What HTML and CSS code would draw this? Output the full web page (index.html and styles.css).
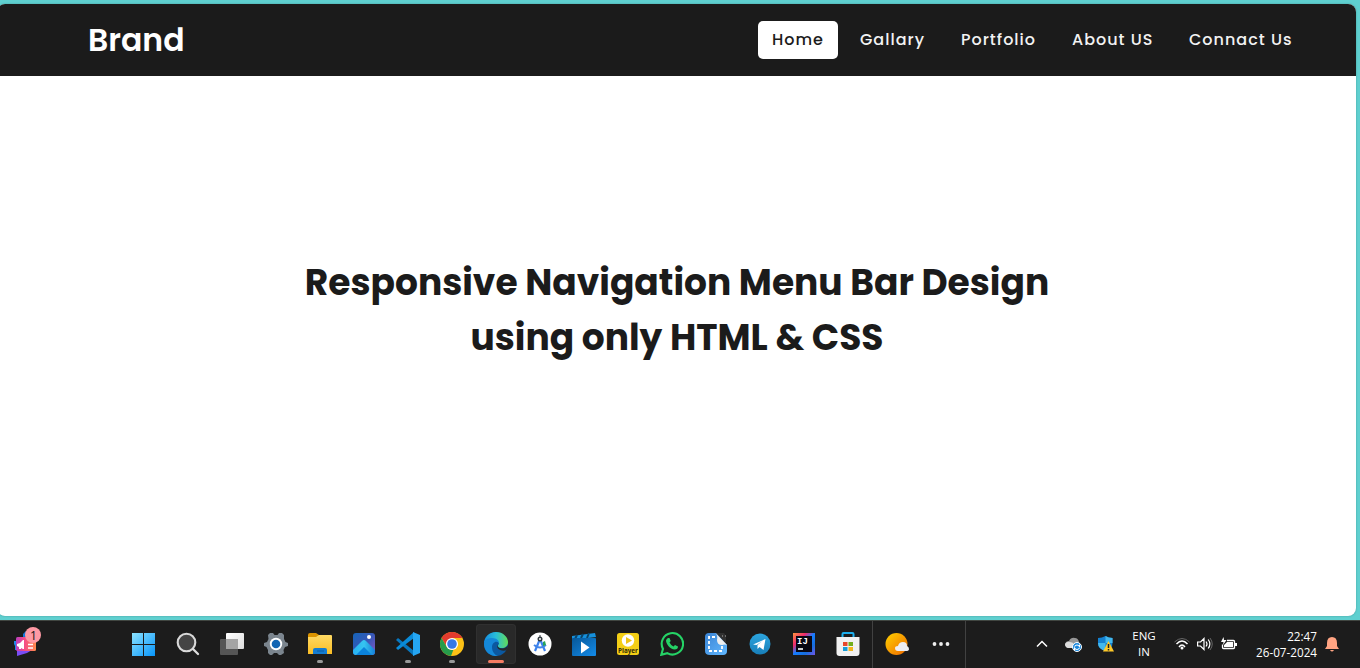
FILE: index.html
```html
<!DOCTYPE html>
<html lang="en">
<head>
<meta charset="utf-8">
<title>Responsive Navigation</title>
<link rel="stylesheet" href="styles.css">
</head>
<body>
<div class="desktop">
<div class="window">
  <header class="navbar">
    <div class="brand">Brand</div>
    <nav class="menu">
      <a class="link home">Home</a><a class="link gallery">Gallary</a><a class="link portfolio">Portfolio</a><a class="link about">About US</a><a class="link contact">Connact Us</a>
    </nav>
  </header>
  <main class="hero"><h1>Responsive Navigation Menu Bar Design<br>using only HTML &amp; CSS</h1></main>
</div>
<footer class="taskbar">
  <div class="widgets">
    <svg width="30" height="32" viewBox="0 0 30 32"><defs><linearGradient id="wg"><stop stop-color="#b83fc0"/><stop offset=".4" stop-color="#f4498a"/><stop offset="1" stop-color="#ff8a4a"/></linearGradient></defs><path d="M11 11V7l3-3v7z" fill="#1677dc"/><path d="M2 14h3v9H3v-4l-1-2z" fill="#2187e8"/><path d="M5 23h15l-5 3-10 3z" fill="#7a4df5"/><rect x="4" y="10" width="20" height="14" rx="1.500" fill="url(#wg)"/><path d="M5 17l3-1 3-3h1v9h-1l-2-1v1H7v-2l-2-1z" fill="#fff"/><path d="M16 17.500h5M16 21h5" stroke="#fff" stroke-width="1.400"/><circle cx="21" cy="8" r="8" fill="#ff99a4"/><text x="21.500" y="12.500" text-anchor="middle" class="badge">1</text></svg>
  </div>
  <div class="apps">
    <span class="app"><svg viewBox="0 0 24 24"><defs><linearGradient id="win" gradientUnits="userSpaceOnUse" x1="0" y1="1" x2="23" y2="24"><stop stop-color="#8be2ff"/><stop offset="1" stop-color="#0795fa"/></linearGradient></defs><path d="M0 1h11v11H0zM12 1h11v11H12zM0 13h11v11H0zM12 13h11v11H12z" fill="url(#win)"/></svg></span>
    <span class="app"><svg viewBox="0 0 24 24"><circle cx="10.500" cy="10.500" r="8.800" fill="#444" stroke="#d9d9d9" stroke-width="2.100"/><path d="M17 17l5 5" stroke="#dedede" stroke-width="2.300" stroke-linecap="round"/></svg></span>
    <span class="app"><svg viewBox="0 0 24 24"><defs><linearGradient id="task" x2="1" y2="1"><stop stop-color="#fff"/><stop offset="1" stop-color="#dcdcdc"/></linearGradient></defs><rect y="7" width="18" height="16" rx="1" fill="#555"/><rect x="6" y="1" width="18" height="16" rx="1" fill="url(#task)"/><path d="M6 7h12v10H6z" fill="#a4a4a4"/></svg></span>
    <span class="app"><svg viewBox="0 0 24 24"><path d="M6 1h3l1.500 2h3L15 1h3l2 2v4l1.500 3 2.500 1v3l-3 1-1.500 3 .5 3-3 2h-2l-2-2h-3l-2 2H6l-2-2v-3l-1.500-3L0 14v-3l3-1 1.500-3L4 3z" fill="#7b858e"/><circle cx="12" cy="12" r="6.200" fill="#fff"/><circle cx="12" cy="12" r="4.300" fill="#1265b3"/></svg></span>
    <span class="app running"><svg viewBox="0 0 24 24"><defs><linearGradient id="fold" x2="0" y2="1"><stop stop-color="#ffda64"/><stop offset="1" stop-color="#fbbd24"/></linearGradient></defs><path d="M0 3q0-2 2-2h6l3 2v6H0z" fill="#dc9400"/><path d="M0 5h8l3-2h12q1 0 1 1v18H0z" fill="url(#fold)"/><path d="M5 22v-4q0-2 2-2h10q2 0 2 2v4z" fill="#147cd1"/><path d="M9 19h7" stroke="#0b5aa0"/></svg></span>
    <span class="app"><svg viewBox="0 0 24 24"><defs><linearGradient id="photo" x2="1" y2="1"><stop stop-color="#1464b8"/><stop offset=".5" stop-color="#3857b7"/><stop offset="1" stop-color="#8757c5"/></linearGradient><linearGradient id="photo2"><stop stop-color="#27b1f4"/><stop offset=".5" stop-color="#36c5f0"/><stop offset="1" stop-color="#147fd8"/></linearGradient></defs><rect x="1" y="1" width="22" height="22" rx="3" fill="url(#photo)"/><path d="M1 18L10 9q2-2 4 0l9 9v2q0 3-3 3H4q-3 0-3-3z" fill="url(#photo2)"/><path d="M4 23l8-8 8 8z" fill="#0b83dc"/><circle cx="17" cy="5" r="2" fill="#fff"/></svg></span>
    <span class="app running"><svg viewBox="0 0 24 24"><path d="M0 8l2-2 16 13v5z" fill="#0878c0"/><path d="M0 16l2 2L18 6V0z" fill="#0a8bd8"/><path d="M17 0l7 3v18l-7 3z" fill="#25a6f2"/></svg></span>
    <span class="app running"><svg viewBox="0 0 24 24"><circle cx="12" cy="12" r="12" fill="#fbc116"/><path d="M1.600 6A12 12 0 0 1 22.400 6H12L7 15z" fill="#e33b2e"/><path d="M1.600 6l5.200 9q2 3 6.500 3L11 24A12 12 0 0 1 1.600 6z" fill="#269c4b"/><circle cx="12" cy="12" r="6.100" fill="#fff"/><circle cx="12" cy="12" r="4.800" fill="#3578e5"/></svg></span>
    <span class="app active"><svg viewBox="0 0 24 24"><defs><linearGradient id="edge"><stop stop-color="#168de0"/><stop offset=".5" stop-color="#28bdd9"/><stop offset="1" stop-color="#62dd57"/></linearGradient></defs><circle cx="12" cy="12" r="12" fill="#0b58a0"/><path d="M0 12C0 5 5 0 12 0s12 5 12 10c0 4-3 6-6 6-5 0-5-2-3-4 0-3-3-5-7-5-5 0-8 3-8 5z" fill="url(#edge)"/><path d="M0 12c0-4 4-6 8-6 5 0 7 3 7 5-3-3-7 0-7 4 0 5 3 8 6 9C6 25 0 19 0 12z" fill="#1588d8"/><path d="M14.500 11.500c-2 2 0 5 3.500 5 3 0 5-2 6-3-.5 3-1 4-2 5-7 1-11-3-7.500-7z" fill="#252a2c"/></svg></span>
    <span class="app"><svg viewBox="0 0 24 24"><circle cx="12" cy="12" r="11.500" fill="#fff"/><path d="M12 7l-5 12M12 7l5 12" stroke="#3c82ee" stroke-width="2.200" fill="none"/><path d="M6 13q6 5 12 0" fill="none" stroke="#4285e8" stroke-width="2"/><circle cx="12" cy="7" r="2.500" fill="#30393e"/><circle cx="12" cy="7" r="1" fill="#fff"/><path d="M12 3v3" stroke="#30393e"/><path d="M15 10l2-1 1 4-3 1z" fill="#28a35b"/></svg></span>
    <span class="app"><svg viewBox="0 0 24 24"><defs><linearGradient id="movie" x2="1" y2="1"><stop stop-color="#075798"/><stop offset="1" stop-color="#138be9"/></linearGradient></defs><path d="M0 4l23-3 1 4L0 8z" fill="#1590dc"/><path d="M5 3l-2 4M11 2L9 6M17 1l-2 5" stroke="#0b4268" stroke-width="2"/><rect y="6" width="24" height="18" rx="1" fill="url(#movie)"/><path d="M9 9.500l8.500 6-8.500 6z" fill="#fff"/></svg></span>
    <span class="app"><svg viewBox="0 0 24 24"><rect x="1" y="1" width="22" height="22" rx="2.500" fill="#f4cf16"/><circle cx="12" cy="8.500" r="6.200" fill="#fff"/><path d="M10 5l6 3.500-6 3.500z" fill="#efc417"/><text x="12" y="20.500" text-anchor="middle" class="player">Player</text></svg></span>
    <span class="app"><svg viewBox="0 0 24 24"><path d="M1.300 22.800l1.700-5.900A10.700 10.700 0 1 1 7.300 21.200z" fill="none" stroke="#25d366" stroke-width="2.100"/><path d="M8 6h1.500l1.200 3-1.200 1.500q1.500 3 4 4l1.500-1.500 3 1.400q0 2.700-3.300 3.200C10 17 6 12 6 8.500Q6.500 6.500 8 6z" fill="#25d366"/></svg></span>
    <span class="app"><svg viewBox="0 0 24 24"><defs><linearGradient id="snip" x2="1" y2="1"><stop stop-color="#3b84d4"/><stop offset="1" stop-color="#60b7ff"/></linearGradient></defs><path d="M12 1h8l2 3v9z" fill="#303030"/><path d="M5 1h7l11 12v6q0 4-4 4H6q-5 0-5-4V5q0-4 4-4z" fill="url(#snip)"/><path d="M11 5H5v14h13v-6" fill="none" stroke="#fff" stroke-width="1.800" stroke-dasharray="3 2"/><path d="M11.500 1L23 13q-2-1-5 0-5 0-5-5 1-4-1.500-7z" fill="#eee"/><path d="M18 4h1M21 4h1" stroke="#aaa"/></svg></span>
    <span class="app"><svg viewBox="0 0 24 24"><defs><linearGradient id="tg" x2="0" y2="1"><stop stop-color="#2ca5df"/><stop offset="1" stop-color="#187fb9"/></linearGradient></defs><circle cx="12" cy="12" r="10.500" fill="url(#tg)"/><path d="M5 12.500L17.500 7l-2 11-4-3-2 2v-4l5-4-6 4z" fill="#fff"/></svg></span>
    <span class="app"><svg viewBox="0 0 24 24"><defs><linearGradient id="ij" x2="1" y2="1"><stop stop-color="#ff963f"/><stop offset=".3" stop-color="#ee286c"/><stop offset=".5" stop-color="#137cff"/><stop offset=".75" stop-color="#176edd"/><stop offset="1" stop-color="#7255e8"/></linearGradient></defs><rect x="1" y="1" width="22" height="22" fill="url(#ij)"/><rect x="4" y="4" width="16" height="16" fill="#080612"/><text x="5" y="12" class="ij">IJ</text><path d="M6 17h5" stroke="#fff" stroke-width="1.600"/></svg></span>
    <span class="app"><svg viewBox="0 0 24 24"><path d="M6.500 7V2q0-1 1-1h9q1 0 1 1v5" fill="none" stroke="#1dafed" stroke-width="2"/><path d="M.5 5h23v16q0 3-3 3h-17q-3 0-3-3z" fill="#f1f1f1"/><path d="M7 10h4.500v4H7z" fill="#e7472a"/><path d="M12.500 10H17v4h-4.500z" fill="#72ae1c"/><path d="M7 15h4.500v4H7z" fill="#159bd7"/><path d="M12.500 15H17v4h-4.500z" fill="#f2b51c"/></svg></span>
  </div>
  <div class="extras">
    <span class="app"><svg viewBox="0 0 24 24"><defs><linearGradient id="sun" x2="1" y2="1"><stop stop-color="#ffd100"/><stop offset="1" stop-color="#ef6900"/></linearGradient></defs><circle cx="11.500" cy="12" r="11" fill="url(#sun)"/><path d="M13 19q-3 0-3-3 0-2 3-2 1-4 5-4t4 4q2 1 2 3t-3 2z" fill="#eeeef2"/></svg></span>
    <span class="app"><svg viewBox="0 0 24 24" fill="#eee"><circle cx="5.500" cy="12" r="1.900"/><circle cx="12" cy="12" r="1.900"/><circle cx="18.500" cy="12" r="1.900"/></svg></span>
  </div>
  <div class="tray">
    <svg class="chevron" width="12" height="12" viewBox="0 0 12 12"><path d="M1 8.500l5-5 5 5" fill="none" stroke="#fff" stroke-width="1.500"/></svg>
    <svg class="cloud" width="17" height="16" viewBox="0 0 17 16"><path d="M3 12q-3-1-3-4 1-3 4-3 2-4 6-3 3 0 4 4l1 6z" fill="#969696"/><path d="M3 12q-3-1-3-4 2-3 5-2 3 0 5 3v3z" fill="#ddd"/><circle cx="12" cy="11" r="4.500" fill="#1685dc" stroke="#fff"/><path d="M9.500 10.500q2.500-3 5 0v-2M14.500 12q-2.500 3-5 0v2" fill="none" stroke="#fff" stroke-width="1.100"/></svg>
    <svg class="shield" width="16" height="18" viewBox="0 0 16 18"><path d="M7.500 1q3 2 7 2v5q0 6-7 8Q0 14 0 8V3q4 0 7.500-2z" fill="#1481d1"/><path d="M0 8h7.500v8Q0 14 0 8zM7.500 1q3 2 7 2v5h-7z" fill="#43b8ed"/><path d="M10.500 6L16 16.500H5z" fill="#ffc928"/><path d="M10.500 9v4M10.500 14v1.500" stroke="#222" stroke-width="1.500"/></svg>
    <div class="language">ENG<br>IN</div>
    <svg class="wifi" width="16" height="14" viewBox="0 0 16 14"><g fill="none"><path d="M.5 5Q8-2 15.500 5" stroke="#666"/><path d="M2.500 7Q8 1 13.500 7M5 10q3-4 6 0" stroke="#fff" stroke-width="1.400"/></g><circle cx="8" cy="11" r="1.500" fill="#fff"/></svg>
    <svg class="volume" width="16" height="14" viewBox="0 0 16 14"><path d="M.6 5h3L7 1.500v11L3.500 9H.6zM9 4.500q2 2.500 0 5M11.200 2.500q3.300 4.500 0 9" fill="none" stroke="#fff" stroke-width="1.200"/><path d="M13 1q4.500 6 0 12" fill="none" stroke="#666"/></svg>
    <svg class="battery" width="17" height="14" viewBox="0 0 17 14"><path d="M6 3.500h6.500q1 0 1 1v6q0 1-1 1h-10q-1 0-1-1v-3" fill="none" stroke="#fff" stroke-width="1.300"/><path d="M3 8l3-3h6v5H3zM14 6h2v3h-2zM2.500 0L0 5h2.500L2 8l3.500-5H3z" fill="#fff"/></svg>
    <div class="clock">22:47<br>26-07-2024</div>
    <svg class="bell" width="14" height="16" viewBox="0 0 14 16"><path d="M2 7q0-6 5-6t5 6v3l2 3H0l2-3zM5 14h4q-2 3-4 0z" fill="#ffa483"/></svg>
  </div>
</footer>
</div>
</body>
</html>
```
FILE: styles.css
```css
* { box-sizing: border-box; }
body { margin: 0; }
.desktop { width: 1360px; height: 668px; display: flex; flex-direction: column; overflow: hidden; background: #5fd0d0; }
.window { width: 1359px; height: 612px; margin: 4px 0 4px -3px; border-radius: 8px; overflow: hidden; background: #fff; box-shadow: 0 0 2px #45999a; flex: none; font-family: Poppins, Inter, sans-serif; }
.navbar { height: 72px; display: flex; align-items: center; justify-content: space-between; background: #1b1b1b; padding: 0 49px 0 91px; color: #fff; }
.brand { font-size: 31.5px; font-weight: 600; line-height: 40px; }
.menu { display: flex; gap: 8px; }
.link { height: 38px; display: flex; align-items: center; padding: 0 14px 2px; border-radius: 5px; font-size: 16px; font-weight: 500; letter-spacing: 1px; color: #f2f2f2; white-space: nowrap; }
.home { width: 80px; background: #fff; color: #1b1b1b; }
.gallery { width: 93px; }
.portfolio { width: 103px; }
.about { width: 109px; }
.contact { width: 132px; }
.hero { height: 540px; display: flex; align-items: flex-start; justify-content: center; padding: 179px 2px 0 3px; }
h1 { margin: 0; text-align: center; color: #1b1b1b; font-size: 36px; line-height: 55px; font-weight: 700; white-space: nowrap; }
.taskbar { height: 48px; border-top: 1px solid #414641; display: flex; background: #1c1c1c; flex: none; color: #fff; font-family: "Open Sans", "Noto Sans", sans-serif; }
.widgets { width: 122px; padding: 6px 0 0 12px; }
.badge { font: 12px "Open Sans", sans-serif; fill: #111; }
.apps { display: flex; width: 750px; }
.extras { display: flex; width: 94px; padding-left: 2px; border: solid #414141; border-width: 0 1px; }
.app { width: 40px; height: 40px; margin: 3px 2px; padding: 8px; flex: none; position: relative; }
.app > svg { width: 24px; height: 24px; display: block; }
.running::after, .active::after { content: ""; position: absolute; width: 6px; height: 3px; bottom: 1px; left: 17px; border-radius: 2px; background: #999; }
.active { background: #292929; border-radius: 4px; box-shadow: inset 0 0 0 1px #303030; }
.active::after { width: 16px; left: 12px; background: #f67c63; }
.player { font: 700 6.3px "Open Sans", sans-serif; fill: #332c08; }
.ij { font: 700 9px "Liberation Mono", monospace; fill: #fff; }
.tray { display: flex; align-items: center; padding-left: 70px; height: 46px; }
.tray > svg { flex: none; }
.chevron { margin-right: 17px; }
.cloud { margin-right: 16px; }
.shield { margin-right: 14px; }
.language { width: 48px; text-align: center; font-size: 11.5px; line-height: 16px; margin-left: -8px; }
.wifi { margin-left: 6px; }
.volume { margin-left: 7px; }
.battery { margin-left: 8px; }
.clock { width: 79px; text-align: right; font-size: 11.7px; line-height: 16px; white-space: nowrap; }
.bell { margin-left: 8px; }
```
